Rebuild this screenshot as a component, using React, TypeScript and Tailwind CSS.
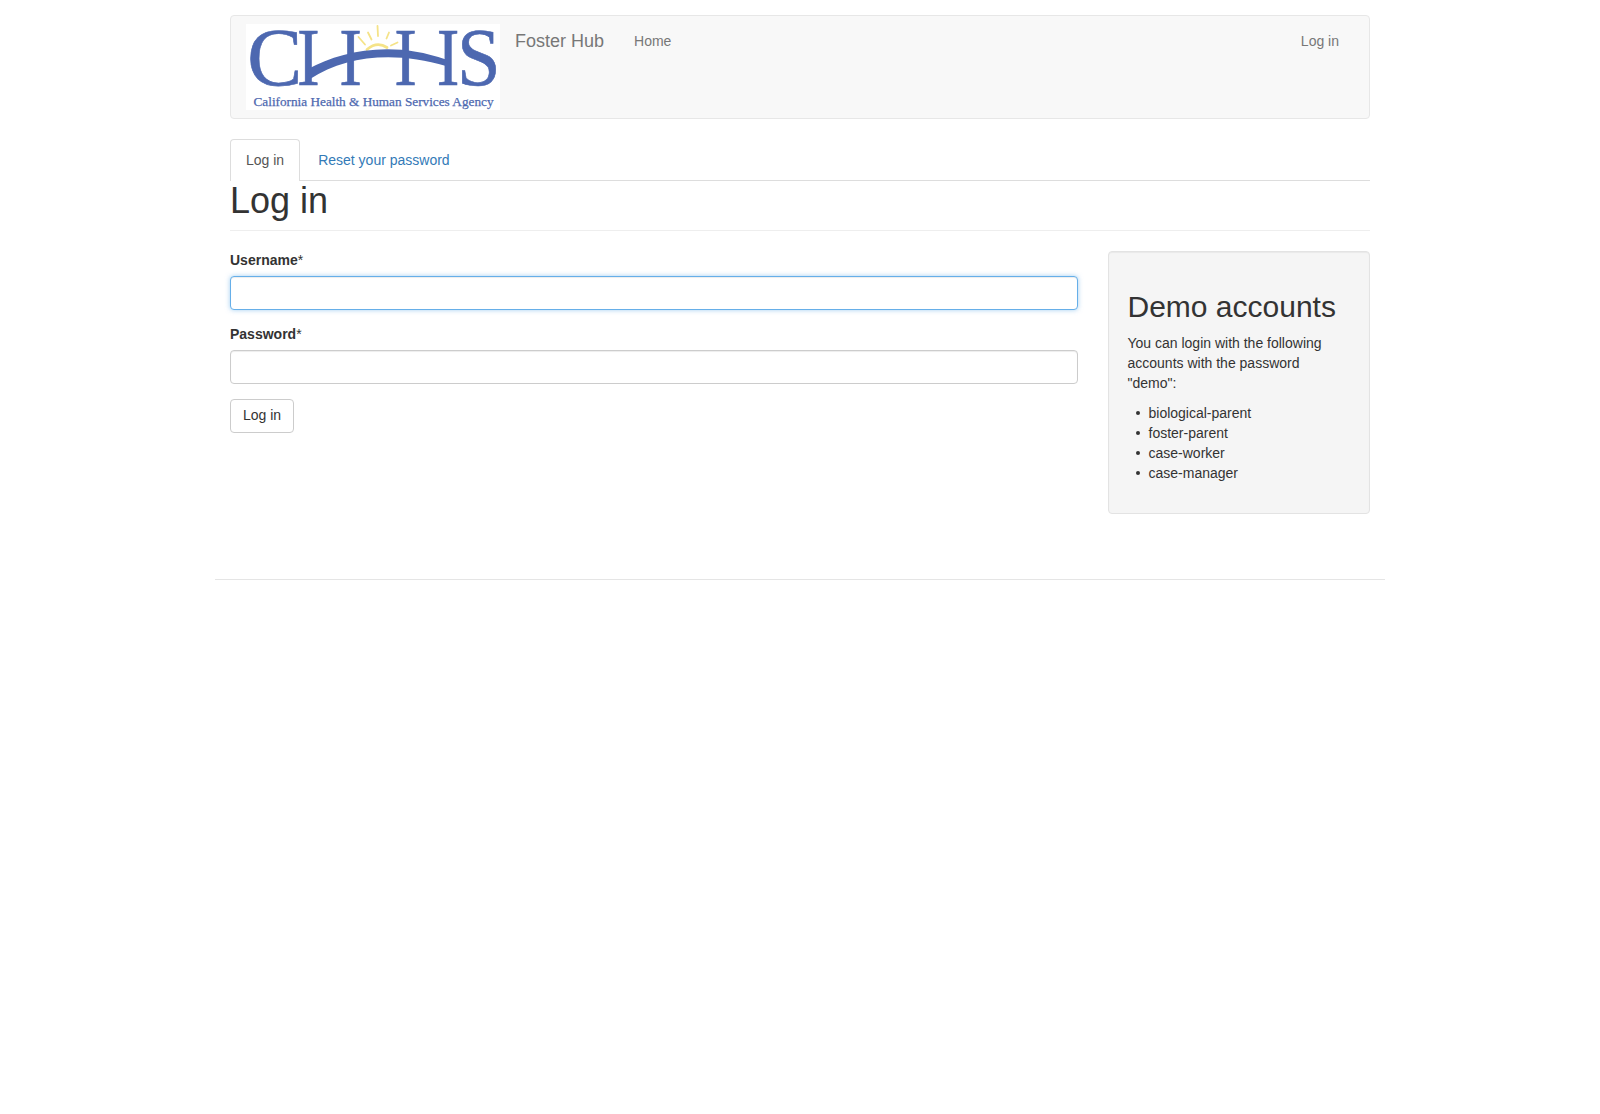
const logoBlue = '#4d68b0';

function Letter({ ch, x, sx }: { ch: string; x: number; sx: number }) {
  return (
    <text
      transform={`translate(${x} 60.5) scale(${sx} 1.03)`}
      fontSize="80"
      fill={logoBlue}
      stroke={logoBlue}
      strokeWidth="0.6"
      fontFamily="'Liberation Serif', serif"
    >
      {ch}
    </text>
  );
}

function Logo() {
  return (
    <svg className="block h-[86px] w-[254px] overflow-visible bg-white" viewBox="0 0 254 86" role="img" aria-label="CHHS">
      <g fill="none" stroke="#f5e388" strokeWidth="1.8" strokeLinecap="round">
        <path d="M121 25.500Q131 17 141 23.500" strokeWidth="2.8" />
        <path d="M112.500 13L119 20.500M122 8.500L125.500 15.500M131.500 2L132 12M143 8.500L140.500 14.500M151.500 18.500L145 21.500" />
      </g>
      <Letter ch="C" x={1.3} sx={1.03} />
      <Letter ch="I" x={51} sx={0.85} />
      <Letter ch="I" x={93.2} sx={0.85} />
      <Letter ch="I" x={148.2} sx={0.85} />
      <Letter ch="I" x={190.7} sx={0.85} />
      <Letter ch="S" x={211} sx={0.98} />
      <path d="M62 45C95 27 145 16 200 35.500V42C150 27 100 31 64 55Z" fill={logoBlue} />
      <text
        x="7.5"
        y="82"
        fontSize="13.5"
        textLength="240"
        lengthAdjust="spacingAndGlyphs"
        fill={logoBlue}
        stroke={logoBlue}
        strokeWidth="0.25"
        fontFamily="'Liberation Serif', serif"
      >
        California Health &amp; Human Services Agency
      </text>
    </svg>
  );
}

function Field({ id, label, focused }: { id: string; label: string; focused?: boolean }) {
  return (
    <div className="mb-[15px]">
      <label htmlFor={id} className="-mt-px mb-[6px] block font-bold">
        {label}
        <span className="font-normal">*</span>
      </label>
      <input
        id={id}
        type={id === 'password' ? 'password' : 'text'}
        className={
          focused
            ? 'block h-[34px] w-full rounded border border-[#66afe9] bg-white px-3 outline-none shadow-[inset_0_1px_1px_rgba(0,0,0,0.075),0_0_5px_rgba(102,175,233,0.6)]'
            : 'block h-[34px] w-full rounded border border-[#ccc] bg-white px-3 outline-none shadow-[inset_0_1px_1px_rgba(0,0,0,0.075)]'
        }
      />
    </div>
  );
}

const accounts = ['biological-parent', 'foster-parent', 'case-worker', 'case-manager'];

export default function App() {
  return (
    <div className="min-h-screen bg-white font-['Liberation_Sans',Arial,sans-serif] text-[14px] leading-[20px] text-[#333]">
      <div className="mx-auto w-[1170px] px-[15px] pt-[15px]">
        <header className="flex h-[104px] rounded border border-[#e7e7e7] bg-[#f8f8f8] pl-[15px] pr-[15px] text-[#777]">
          <a href="#" className="mt-2"><Logo /></a>
          <a href="#" className="ml-[15px] pt-[15px] text-[18px]">Foster Hub</a>
          <a href="#" className="ml-[30px] pt-[15px]">Home</a>
          <a href="#" className="ml-auto pr-[15px] pt-[15px]">Log in</a>
        </header>

        <nav className="mt-5 flex h-[42px] border-b border-[#ddd]">
          <a href="#" className="mr-[2px] h-[42px] rounded-t border border-b-0 border-[#ddd] bg-white px-[15px] py-[10px] text-[#555]">Log in</a>
          <a href="#" className="px-4 py-[11px] text-[#337ab7]">Reset your password</a>
        </nav>
        <h1 className="mb-5 h-[50px] border-b border-[#eee] text-[36px] leading-[39.6px]">Log in</h1>

        <div className="flex items-start justify-between">
          <form className="w-[848px]">
            <Field id="username" label="Username" focused />
            <Field id="password" label="Password" />
            <button type="button" className="block h-[34px] rounded border border-[#ccc] bg-white px-3 pb-[2px]">Log in</button>
          </form>
          <aside className="h-[263px] w-[262px] rounded border border-[#e3e3e3] bg-[#f5f5f5] px-[18.5px] pt-[38px] shadow-[inset_0_1px_1px_rgba(0,0,0,0.05)]">
            <h2 className="mb-[10px] whitespace-nowrap text-[30px] leading-[33px]">Demo accounts</h2>
            <p className="mb-[10px]">You can login with the following accounts with the password "demo":</p>
            <ul>
              {accounts.map((name) => (
                <li key={name} className="flex items-center">
                  <span className="ml-[8.500px] mr-[8.500px] size-[4px] rounded-full bg-[#333]" />
                  {name}
                </li>
              ))}
            </ul>
          </aside>
        </div>
      </div>
      <footer className="mx-auto mt-[65px] w-[1170px] border-t border-[#e5e5e5]" />
    </div>
  );
}
